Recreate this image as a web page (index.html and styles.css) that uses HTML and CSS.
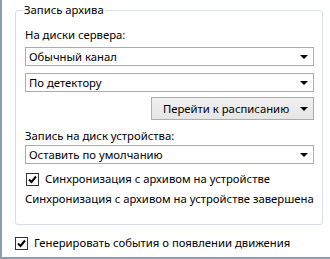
FILE: index.html
```html
<!doctype html>
<html lang='ru'>
<head>
  <title>Запись архива</title>
  <meta charset='utf-8'>
  <link rel="stylesheet" href="styles.css">
</head>
<body>
  <main class='panel'>
    <fieldset class='group'>
      <legend>Запись архива</legend>
      <p class='label first'>На диски сервера:</p>
      <div class='combo'><span>Обычный канал</span><i class='arrow'></i></div>
      <div class='combo'><span>По детектору</span><i class='arrow'></i></div>
      <div class='btnrow'>
        <button class='btn'><span>Перейти к расписанию</span><i class='arrow'></i></button>
      </div>
      <p class='label second'>Запись на диск устройства:</p>
      <div class='combo'><span>Оставить по умолчанию</span><i class='arrow'></i></div>
      <label class='check inner'>
        <svg class='box' width='13' height='13' viewBox='0 0 13 13'><rect x='0.5' y='0.5' width='12' height='12' fill='#fff' stroke='#333'/><path d='M3 6.5 L5.5 9 L10 3.5' fill='none' stroke='#000' stroke-width='2'/></svg>
        <span>Синхронизация с архивом на устройстве</span>
      </label>
      <p class='status'>Синхронизация с архивом на устройстве завершена</p>
    </fieldset>
    <label class='check outer'>
      <svg class='box' width='13' height='13' viewBox='0 0 13 13'><rect x='0.5' y='0.5' width='12' height='12' fill='#fff' stroke='#333'/><path d='M3 6.5 L5.5 9 L10 3.5' fill='none' stroke='#000' stroke-width='2'/></svg>
      <span>Генерировать события о появлении движения</span>
    </label>
  </main>
</body>
</html>
```
FILE: styles.css
```css
*, html { box-sizing: border-box; }
body    { margin: 0; background: #fff; color: #000; font: 11.3px "Noto Sans", "Open Sans", sans-serif; }
p       { margin: 0; }

.panel { width: 330px; height: 259px; border-left: 2px solid #8c9cb5; border-bottom: 2px solid #8c9cb5; padding: 2px 7px 0 13px; display: flex; flex-direction: column; }

.group { margin: 0; border: 1px solid #d5dfe5; border-radius: 3px; padding: 9px 8px 17px 9px; display: flex; flex-direction: column; }
.group legend { padding: 0 1px; margin-left: -2px; line-height: 16px; }

.label { line-height: 16px; }
.label.first  { margin-bottom: 4px; }
.label.second { margin-bottom: 1px; }

.combo { height: 19px; border: 1px solid #acacac; background: #fff; display: flex; align-items: center; justify-content: space-between; padding: 0 5px 0 3px; margin-bottom: 7px; }
.arrow { width: 0; height: 0; border-left: 4px solid transparent; border-right: 4px solid transparent; border-top: 4px solid #000; }

.btnrow { display: flex; justify-content: flex-end; margin: -2px 0 8px 0; }
.btn { font: inherit; color: #000; height: 23px; width: 163px; border: 1px solid #acacac; background: linear-gradient(#f0f0f0, #e5e5e5); display: flex; align-items: center; justify-content: space-between; padding: 0 5px 0 11px; }

.check { display: flex; align-items: center; gap: 6px; line-height: 16px; }
.check.inner { margin: 0 0 4px 1px; }
.check.outer { margin: 10px 0 0 0; }
.box { flex: none; }

.status { line-height: 16px; }
```
